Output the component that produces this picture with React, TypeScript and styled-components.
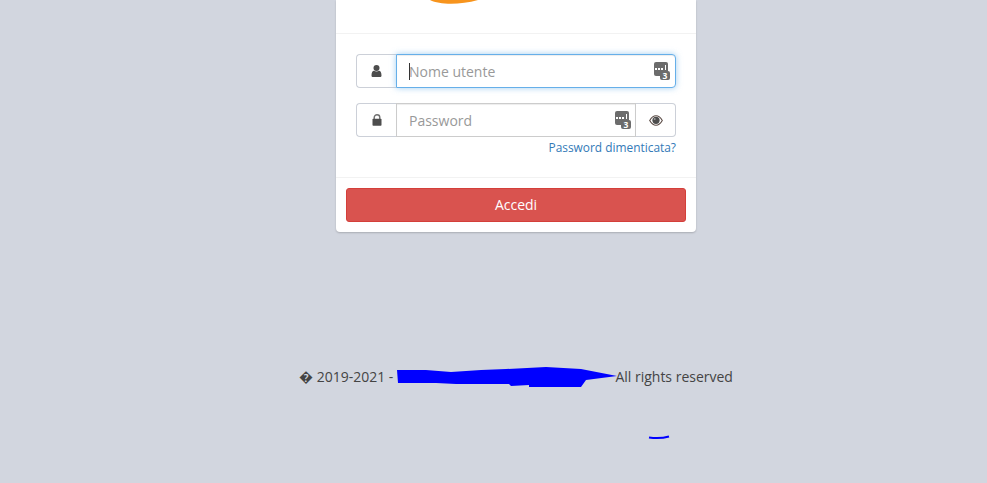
import React from 'react';
import styled, { createGlobalStyle } from 'styled-components';

const GlobalStyle = createGlobalStyle`
    html, body {
        background: #d2d6df;
        height: 100%;
        margin: 0;
    }
    body {
        color: #444;
        font-family: "Open Sans", "Liberation Sans", sans-serif;
        overflow: hidden;
    }
`;

const Page = styled.div`
    align-items: center;
    box-sizing: border-box;
    display: flex;
    flex-direction: column;
    height: 483px;
    padding-left: 45px;
`;

const Card = styled.div`
    background: #fff;
    border-radius: 0 0 4px 4px;
    box-shadow: 0 1px 2px rgba(0, 0, 0, 0.2);
    width: 360px;
`;

const LogoSection = styled.div`
    border-bottom: 1px solid #f2f2f2;
    height: 33px;
    overflow: hidden;
    padding-left: 92px;
`;

const FormSection = styled.div`
    border-bottom: 1px solid #f2f2f2;
    display: flex;
    flex-direction: column;
    height: 123px;
    padding: 20px 20px 0;
`;

const InputGroup = styled.div<{ $focused?: boolean }>`
    display: flex;
    height: 34px;
    margin-bottom: ${({ $focused }) => ($focused ? '15px' : '0')};
`;

const Addon = styled.span<{ $side: 'left' | 'right' }>`
    align-items: center;
    background: #fff;
    border: 1px solid #ccd0d8;
    border-left-width: ${({ $side }) => ($side === 'left' ? '1px' : '0')};
    border-radius: ${({ $side }) => ($side === 'left' ? '4px 0 0 4px' : '0 4px 4px 0')};
    border-right-width: ${({ $side }) => ($side === 'left' ? '0' : '1px')};
    box-sizing: border-box;
    display: flex;
    flex-shrink: 0;
    justify-content: center;
    width: 40px;
`;

const FieldWrap = styled.div`
    flex: 1;
    min-width: 0;
    position: relative;
`;

const Field = styled.input<{ $focused?: boolean; $last?: boolean }>`
    background: #fff;
    border: 1px solid ${({ $focused }) => ($focused ? '#66afe9' : '#ccc')};
    border-radius: ${({ $last }) => ($last ? '0 4px 4px 0' : '0')};
    box-shadow: ${({ $focused }) =>
        $focused ? 'inset 0 1px 1px rgba(0,0,0,.075), 0 0 6px rgba(102,175,233,.6)' : 'inset 0 1px 1px rgba(0,0,0,.075)'};
    box-sizing: border-box;
    color: #555;
    font-family: inherit;
    font-size: 14px;
    height: 34px;
    outline: none;
    padding: 6px 12px;
    width: 100%;

    &::placeholder {
        color: #999;
        opacity: 1;
    }
`;

const Caret = styled.span`
    background: #333;
    height: 17px;
    left: 13px;
    position: absolute;
    top: 9px;
    width: 1px;
`;

const KeeperBadge = styled.svg<{ $right: number }>`
    height: 18px;
    position: absolute;
    right: ${({ $right }) => $right}px;
    top: 8px;
    width: 16px;
`;

const ForgotRow = styled.div`
    display: flex;
    justify-content: flex-end;
    line-height: 20px;
`;

const ForgotLink = styled.a`
    color: #337ab7;
    font-size: 11.9px;
    text-decoration: none;
`;

const ButtonSection = styled.div`
    display: flex;
    padding: 10px;
`;

const SubmitButton = styled.button`
    background: #d9534f;
    border: 1px solid #d43f3a;
    border-radius: 3px;
    color: #fff;
    font-family: inherit;
    font-size: 14px;
    height: 34px;
    padding: 0 0 2px;
    width: 100%;
`;

const Copyright = styled.div`
    align-items: center;
    color: #444;
    display: flex;
    font-size: 14px;
    line-height: 20px;
    margin-top: 134px;
    white-space: pre;
`;

const Scribble = styled.svg`
    flex-shrink: 0;
    height: 22px;
    margin: 0 -3px 0 3px;
    width: 222px;
`;

const BottomMark = styled.svg`
    height: 5px;
    margin: 47px 0 0 285px;
    width: 22px;
`;

const UserIcon = () => (
    <svg width="11" height="12" viewBox="0 0 11 12">
        <circle cx="5.5" cy="3" r="3" fill="#4d4d4d" />
        <path d="M0.5 10.5 C0.5 7.5 1.5 5.8 3 5.8 C4.3 6.8 6.7 6.8 8 5.8 C9.5 5.8 10.5 7.5 10.5 10.5 C10.5 11.5 9.8 12 9 12 H2 C1.2 12 0.5 11.5 0.5 10.5 Z" fill="#4d4d4d" />
    </svg>
);

const LockIcon = () => (
    <svg width="10" height="12" viewBox="0 0 10 12">
        <path d="M2.2 5.5 V3.5 C2.2 -0.2 7.8 -0.2 7.8 3.5 V5.5" fill="none" stroke="#6f6f6f" strokeWidth="1.4" />
        <rect x="0.5" y="4.8" width="9" height="7" rx="0.8" fill="#4d4d4d" />
    </svg>
);

const EyeIcon = () => (
    <svg width="14" height="11" viewBox="0 0 14 11">
        <path d="M0.7 5.5 C3 1.5 5 0.8 7 0.8 C9 0.8 11 1.5 13.3 5.5 C11 9.5 9 10.2 7 10.2 C5 10.2 3 9.5 0.7 5.5 Z" fill="none" stroke="#5a4a44" strokeWidth="1.1" />
        <circle cx="7" cy="5.3" r="3.6" fill="#4d4d4d" />
        <circle cx="5.7" cy="4" r="1" fill="#9a9a9a" />
    </svg>
);

const Keeper = ({ right }: { right: number }) => (
    <KeeperBadge $right={right} viewBox="0 0 16 18">
        <rect x="0" y="0" width="14" height="14" rx="2" fill="#6c6c6c" />
        <rect x="1" y="6" width="2" height="2" fill="#fff" />
        <rect x="4" y="6" width="2" height="2" fill="#fff" />
        <rect x="7" y="6" width="2" height="2" fill="#fff" />
        <rect x="11" y="3" width="1" height="5" fill="#fff" />
        <rect x="6" y="9" width="10" height="9" rx="2" fill="#6c6c6c" />
        <text x="11" y="16.5" fontSize="8.5" fontWeight="700" fill="#fff" textAnchor="middle" fontFamily="Open Sans">3</text>
    </KeeperBadge>
);

export default function App() {
    return (
        <Page>
            <GlobalStyle />
            <Card>
                <LogoSection>
                    <svg width="60" height="5" viewBox="0 0 60 5" style={{ display: 'block' }}>
                        <path d="M2 0 C12 5 32 5 50 0 Z" fill="#f7941d" />
                    </svg>
                </LogoSection>
                <FormSection>
                    <InputGroup $focused>
                        <Addon $side="left">
                            <UserIcon />
                        </Addon>
                        <FieldWrap>
                            <Field $focused $last placeholder="Nome utente" readOnly />
                            <Caret />
                            <Keeper right={6} />
                        </FieldWrap>
                    </InputGroup>
                    <InputGroup>
                        <Addon $side="left">
                            <LockIcon />
                        </Addon>
                        <FieldWrap>
                            <Field placeholder="Password" type="password" readOnly />
                            <Keeper right={5} />
                        </FieldWrap>
                        <Addon $side="right">
                            <EyeIcon />
                        </Addon>
                    </InputGroup>
                    <ForgotRow>
                        <ForgotLink href="#">Password dimenticata?</ForgotLink>
                    </ForgotRow>
                </FormSection>
                <ButtonSection>
                    <SubmitButton>Accedi</SubmitButton>
                </ButtonSection>
            </Card>
            <Copyright>
                <span>� 2019-2021 -</span>
                <Scribble viewBox="0 0 222 22">
                    <path
                        d="M1 4 L30 4 L55 6 L85 4 L110 3 L150 1 L185 3 L221 10 L190 14 L185 21 L133 21 L133 19 L115 20 L113 18 L60 18 L40 17 L2 17 Z"
                        fill="#0000ff"
                    />
                </Scribble>
                <span>All rights reserved</span>
            </Copyright>
            <BottomMark viewBox="0 0 22 5">
                <path d="M1 2.5 C8 3.5 14 3.5 21 1.5" stroke="#0000ff" strokeWidth="2" fill="none" />
            </BottomMark>
        </Page>
    );
}
